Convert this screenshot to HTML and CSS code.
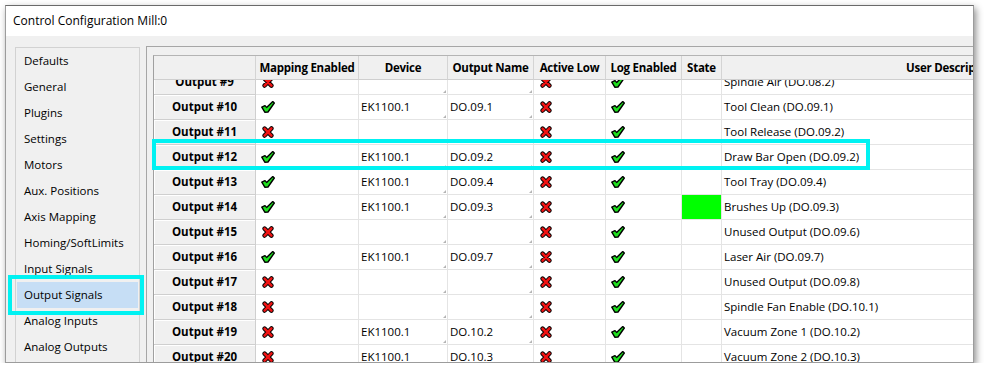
FILE: index.html
```html
<!DOCTYPE html>
<html>
<head>
<meta charset="utf-8">
<title>Control Configuration Mill:0</title>
<link rel="stylesheet" href="styles.css">
</head>
<body>

<svg class="defs" width="0" height="0">
  <symbol id="ok" viewBox="0 0 14 12">
    <polygon points="0.8,6.2 4,4.6 5.6,6.4 11.8,0.6 13.3,2 7,11 3.8,11.2" fill="#1fe01f" stroke="#000" stroke-width="1.4" stroke-linejoin="round"/>
  </symbol>
  <symbol id="no" viewBox="0 0 13 13">
    <path d="M2.8 2.8 L10.2 10.4 M10.2 2.6 L2.8 10.4" stroke="#000" stroke-width="4.8" stroke-linecap="round"/>
    <path d="M2.8 2.8 L10.2 10.4 M10.2 2.6 L2.8 10.4" stroke="#f01414" stroke-width="2.8" stroke-linecap="round"/>
  </symbol>
</svg>

<div class="window">
  <div class="titlebar">Control Configuration Mill:0</div>

  <div class="client">
    <ul class="nav">
      <li>Defaults</li>
      <li>General</li>
      <li>Plugins</li>
      <li>Settings</li>
      <li>Motors</li>
      <li>Aux. Positions</li>
      <li>Axis Mapping</li>
      <li>Homing/SoftLimits</li>
      <li>Input Signals</li>
      <li class="selected">Output Signals</li>
      <li>Analog Inputs</li>
      <li>Analog Outputs</li>
    </ul>

    <div class="panel">
      <div class="grid">
        <div class="row head">
          <div class="hc"></div>
          <div class="hc">Mapping Enabled</div>
          <div class="hc">Device</div>
          <div class="hc">Output Name</div>
          <div class="hc">Active Low</div>
          <div class="hc">Log Enabled</div>
          <div class="hc">State</div>
          <div class="hc desc-head">User Description</div>
        </div>

        <div class="viewport">
          <div class="rows">

            <div class="row">
              <div class="rh">Output #9</div>
              <div class="c"><svg class="ico"><use href="#no"/></svg></div>
              <div class="c combo"></div>
              <div class="c combo"></div>
              <div class="c"><svg class="ico"><use href="#no"/></svg></div>
              <div class="c"><svg class="ico"><use href="#ok"/></svg></div>
              <div class="c"></div>
              <div class="c">Spindle Air (DO.08.2)</div>
            </div>

            <div class="row">
              <div class="rh">Output #10</div>
              <div class="c"><svg class="ico"><use href="#ok"/></svg></div>
              <div class="c combo">EK1100.1</div>
              <div class="c combo">DO.09.1</div>
              <div class="c"><svg class="ico"><use href="#no"/></svg></div>
              <div class="c"><svg class="ico"><use href="#ok"/></svg></div>
              <div class="c"></div>
              <div class="c">Tool Clean (DO.09.1)</div>
            </div>

            <div class="row">
              <div class="rh">Output #11</div>
              <div class="c"><svg class="ico"><use href="#no"/></svg></div>
              <div class="c combo"></div>
              <div class="c combo"></div>
              <div class="c"><svg class="ico"><use href="#no"/></svg></div>
              <div class="c"><svg class="ico"><use href="#ok"/></svg></div>
              <div class="c"></div>
              <div class="c">Tool Release (DO.09.2)</div>
            </div>

            <div class="row">
              <div class="rh">Output #12</div>
              <div class="c"><svg class="ico"><use href="#ok"/></svg></div>
              <div class="c combo">EK1100.1</div>
              <div class="c combo">DO.09.2</div>
              <div class="c"><svg class="ico"><use href="#no"/></svg></div>
              <div class="c"><svg class="ico"><use href="#ok"/></svg></div>
              <div class="c"></div>
              <div class="c">Draw Bar Open (DO.09.2)</div>
            </div>

            <div class="row">
              <div class="rh">Output #13</div>
              <div class="c"><svg class="ico"><use href="#ok"/></svg></div>
              <div class="c combo">EK1100.1</div>
              <div class="c combo">DO.09.4</div>
              <div class="c"><svg class="ico"><use href="#no"/></svg></div>
              <div class="c"><svg class="ico"><use href="#ok"/></svg></div>
              <div class="c"></div>
              <div class="c">Tool Tray (DO.09.4)</div>
            </div>

            <div class="row">
              <div class="rh">Output #14</div>
              <div class="c"><svg class="ico"><use href="#ok"/></svg></div>
              <div class="c combo">EK1100.1</div>
              <div class="c combo">DO.09.3</div>
              <div class="c"><svg class="ico"><use href="#no"/></svg></div>
              <div class="c"><svg class="ico"><use href="#ok"/></svg></div>
              <div class="c state-on"></div>
              <div class="c">Brushes Up (DO.09.3)</div>
            </div>

            <div class="row">
              <div class="rh">Output #15</div>
              <div class="c"><svg class="ico"><use href="#no"/></svg></div>
              <div class="c combo"></div>
              <div class="c combo"></div>
              <div class="c"><svg class="ico"><use href="#no"/></svg></div>
              <div class="c"><svg class="ico"><use href="#ok"/></svg></div>
              <div class="c"></div>
              <div class="c">Unused Output (DO.09.6)</div>
            </div>

            <div class="row">
              <div class="rh">Output #16</div>
              <div class="c"><svg class="ico"><use href="#ok"/></svg></div>
              <div class="c combo">EK1100.1</div>
              <div class="c combo">DO.09.7</div>
              <div class="c"><svg class="ico"><use href="#no"/></svg></div>
              <div class="c"><svg class="ico"><use href="#ok"/></svg></div>
              <div class="c"></div>
              <div class="c">Laser Air (DO.09.7)</div>
            </div>

            <div class="row">
              <div class="rh">Output #17</div>
              <div class="c"><svg class="ico"><use href="#no"/></svg></div>
              <div class="c combo"></div>
              <div class="c combo"></div>
              <div class="c"><svg class="ico"><use href="#no"/></svg></div>
              <div class="c"><svg class="ico"><use href="#ok"/></svg></div>
              <div class="c"></div>
              <div class="c">Unused Output (DO.09.8)</div>
            </div>

            <div class="row">
              <div class="rh">Output #18</div>
              <div class="c"><svg class="ico"><use href="#no"/></svg></div>
              <div class="c combo"></div>
              <div class="c combo"></div>
              <div class="c"><svg class="ico"><use href="#no"/></svg></div>
              <div class="c"><svg class="ico"><use href="#ok"/></svg></div>
              <div class="c"></div>
              <div class="c">Spindle Fan Enable (DO.10.1)</div>
            </div>

            <div class="row">
              <div class="rh">Output #19</div>
              <div class="c"><svg class="ico"><use href="#no"/></svg></div>
              <div class="c combo">EK1100.1</div>
              <div class="c combo">DO.10.2</div>
              <div class="c"><svg class="ico"><use href="#no"/></svg></div>
              <div class="c"><svg class="ico"><use href="#ok"/></svg></div>
              <div class="c"></div>
              <div class="c">Vacuum Zone 1 (DO.10.2)</div>
            </div>

            <div class="row">
              <div class="rh">Output #20</div>
              <div class="c"><svg class="ico"><use href="#no"/></svg></div>
              <div class="c combo">EK1100.1</div>
              <div class="c combo">DO.10.3</div>
              <div class="c"><svg class="ico"><use href="#no"/></svg></div>
              <div class="c"><svg class="ico"><use href="#ok"/></svg></div>
              <div class="c"></div>
              <div class="c">Vacuum Zone 2 (DO.10.3)</div>
            </div>

          </div>
        </div>
      </div>
    </div>
  </div>

  <!-- callout boxes drawn over the screenshot -->
  <div class="mark mark-nav"></div>
  <div class="mark mark-row"></div>
</div>

</body>
</html>
```

FILE: styles.css
```css
html, body { margin: 0; padding: 0; background: #ffffff; }
body { font-family: "Open Sans", "Liberation Sans", sans-serif; font-size: 11.5px; color: #000; }
.defs { position: absolute; width: 0; height: 0; }

.window {
  position: relative;
  margin: 5px 0 0 5px;
  width: 967px;
  height: 356px;
  border: 1px solid #9c9c9c;
  border-top-color: #6a6a6a;
  background: #f0f0f0;
  overflow: hidden;
  box-shadow: 2px 3px 7px rgba(0, 0, 0, 0.45);
}

.titlebar {
  height: 30px;
  line-height: 30px;
  padding-left: 7px;
  background: #ffffff;
  font-size: 12px;
}

.client { display: flex; align-items: flex-start; height: 326px; }

/* left list */
.nav {
  list-style: none;
  margin: 11px 0 0 9px;
  padding: 0 1px;
  width: 121px;
  height: 400px;
  border: 1px solid #d2d2d2;
  flex: none;
}
.nav li { height: 26px; line-height: 26px; padding-left: 7px; white-space: nowrap; }
.nav li.selected { background: #c6def5; }

/* grid panel */
.panel {
  margin: 10px 0 0 6px;
  padding: 8px 0 0 6px;
  border-left: 1px solid #a6a6a6;
  border-top: 1px solid #a6a6a6;
  flex: 1;
  min-width: 0;
  height: 400px;
}
.grid {
  border-left: 1px solid #a0a0a0;
  border-top: 1px solid #b4b4b4;
  background: #ffffff;
  height: 400px;
}

.row {
  display: grid;
  grid-template-columns: 102px 103px 89px 86px 72px 76px 40px 480px;
  height: 25px;
}
.row > div { box-sizing: border-box; height: 25px; }

.head, .head > div { height: 24px; }
.hc {
  background: #f0f0f0;
  border-right: 1px solid #d4d4d4;
  border-bottom: 1px solid #cfcfcf;
  font-weight: bold;
  text-align: center;
  line-height: 23px;
  letter-spacing: -0.25px;
  white-space: nowrap;
  overflow: hidden;
}
.desc-head { text-align: left; padding-left: 184px; }

.viewport { height: 300px; overflow: hidden; }
.rows { margin-top: -10px; }

.rh {
  background: #f0f0f0;
  border-right: 1px solid #cfcfcf;
  border-bottom: 1px solid #cfcfcf;
  box-shadow: inset 1px 1px 0 #ffffff;
  font-weight: bold;
  text-align: center;
  line-height: 24px;
}
.c {
  position: relative;
  border-right: 1px solid #e4e4e4;
  border-bottom: 1px solid #e4e4e4;
  padding-left: 2px;
  line-height: 24px;
  white-space: nowrap;
}
.combo::after {
  content: "";
  position: absolute;
  right: 1px;
  bottom: 1px;
  border-left: 3px solid transparent;
  border-bottom: 3px solid #b4b4b4;
}
.state-on { background: #00ff00; }

.ico { display: block; width: 14px; height: 12px; margin: 6px 0 0 3px; }

/* cyan callouts */
.mark { position: absolute; border: 4px solid #00f2f2; box-sizing: border-box; }
.mark-nav { left: 2px; top: 269px; width: 136px; height: 40px; }
.mark-row { left: 146px; top: 133px; width: 718px; height: 31px; }
```
